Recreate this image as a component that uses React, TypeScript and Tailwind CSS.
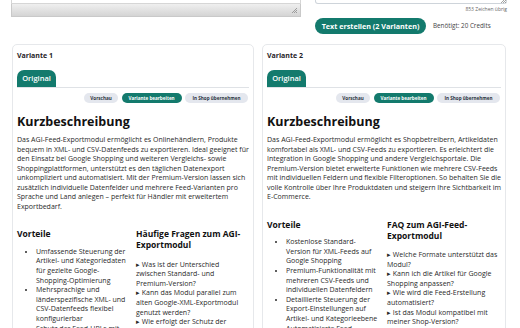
import React from "react";

const TEAL = "bg-[#137a6d]";

function Grip() {
  return (
    <svg width="5" height="5" viewBox="0 0 5 5" className="block">
      <path d="M5 0 L0 5 M5 2 L2 5 M5 4 L4 5" stroke="#8a8a8a" strokeWidth="0.8" />
    </svg>
  );
}

type Card = {
  title: string;
  para: string[];
  leftHead: string[];
  list: string[][];
  rightHead: string[];
  faq: string[][];
};

const cards: Card[] = [
  {
    title: "Variante 1",
    para: [
      "Das AGI-Feed-Exportmodul ermöglicht es Onlinehändlern, Produkte",
      "bequem in XML- und CSV-Datenfeeds zu exportieren. Ideal geeignet für",
      "den Einsatz bei Google Shopping und weiteren Vergleichs- sowie",
      "Shoppingplattformen, unterstützt es den täglichen Datenexport",
      "unkompliziert und automatisiert. Mit der Premium-Version lassen sich",
      "zusätzlich individuelle Datenfelder und mehrere Feed-Varianten pro",
      "Sprache und Land anlegen – perfekt für Händler mit erweitertem",
      "Exportbedarf.",
    ],
    leftHead: ["Vorteile"],
    list: [
      ["Umfassende Steuerung der", "Artikel- und Kategoriedaten", "für gezielte Google-", "Shopping-Optimierung"],
      ["Mehrsprachige und", "länderspezifische XML- und", "CSV-Datenfeeds flexibel", "konfigurierbar"],
      ["Schutz der Feed-URLs mit", "Passwort und Token"],
    ],
    rightHead: ["Häufige Fragen zum AGI-", "Exportmodul"],
    faq: [
      ["Was ist der Unterschied", "zwischen Standard- und", "Premium-Version?"],
      ["Kann das Modul parallel zum", "alten Google-XML-Exportmodul", "genutzt werden?"],
      ["Wie erfolgt der Schutz der", "Feed-URLs?"],
    ],
  },
  {
    title: "Variante 2",
    para: [
      "Das AGI-Feed-Exportmodul ermöglicht es Shopbetreibern, Artikeldaten",
      "komfortabel als XML- und CSV-Feeds zu exportieren. Es erleichtert die",
      "Integration in Google Shopping und andere Vergleichsportale. Die",
      "Premium-Version bietet erweiterte Funktionen wie mehrere CSV-Feeds",
      "mit individuellen Feldern und flexible Filteroptionen. So behalten Sie die",
      "volle Kontrolle über Ihre Produktdaten und steigern Ihre Sichtbarkeit im",
      "E-Commerce.",
    ],
    leftHead: ["Vorteile"],
    list: [
      ["Kostenlose Standard-", "Version für XML-Feeds auf", "Google Shopping"],
      ["Premium-Funktionalität mit", "mehreren CSV-Feeds und", "individuellen Datenfeldern"],
      ["Detaillierte Steuerung der", "Export-Einstellungen auf", "Artikel- und Kategorieebene"],
      ["Automatisierte Feed-", "Erstellung per Cronjob"],
    ],
    rightHead: ["FAQ zum AGI-Feed-", "Exportmodul"],
    faq: [
      ["Welche Formate unterstützt das", "Modul?"],
      ["Kann ich die Artikel für Google", "Shopping anpassen?"],
      ["Wie wird die Feed-Erstellung", "automatisiert?"],
      ["Ist das Modul kompatibel mit", "meiner Shop-Version?"],
    ],
  },
];

function Lines({ lines }: { lines: string[] }) {
  return (
    <>
      {lines.map((l, i) => (
        <span key={i} className="block whitespace-nowrap">
          {l}
        </span>
      ))}
    </>
  );
}

function VariantCard({ c }: { c: Card }) {
  return (
    <div className="flex-1 border border-[#e6e8eb] rounded-[5px] px-[4px] pt-[6px]">
      <div className="text-[7px] leading-[10px] font-bold text-[#1f2328]">{c.title}</div>
      <div className="mt-[9px] border-b border-[#dfe2e6] flex">
        <div className={`${TEAL} text-white text-[7.5px] font-semibold h-[17px] w-[39px] rounded-t-[7px] flex items-center justify-center`}>
          Original
        </div>
      </div>
      <div className="mt-[5px] flex justify-end gap-[3.5px] pr-[1px]">
        <span className="h-[10px] w-[34px] rounded-full bg-[#e4e7ee] text-[#2b3340] text-[4.6px] font-bold flex items-center justify-center">
          Vorschau
        </span>
        <span className={`h-[10px] w-[60px] rounded-full ${TEAL} text-white text-[4.6px] font-bold flex items-center justify-center`}>
          Variante bearbeiten
        </span>
        <span className="h-[10px] w-[63px] rounded-full bg-[#e4e7ee] text-[#2b3340] text-[4.6px] font-bold flex items-center justify-center">
          In Shop übernehmen
        </span>
      </div>
      <div className="mt-[12px] text-[12.5px] leading-[14px] font-bold text-[#111]">Kurzbeschreibung</div>
      <div className="mt-[6px] text-[7px] leading-[9.5px] text-[#2a2a2a]">
        <Lines lines={c.para} />
      </div>
      <div className="mt-[17px] grid grid-cols-2 gap-[6px]">
        <div>
          <div className="text-[8.5px] leading-[11.3px] font-bold text-[#111]">
            <Lines lines={c.leftHead} />
          </div>
          <ul className="mt-[7.5px] list-disc pl-[19px] text-[7px] leading-[9.6px] text-[#2a2a2a]">
            {c.list.map((it, i) => (
              <li key={i}>
                <Lines lines={it} />
              </li>
            ))}
          </ul>
        </div>
        <div>
          <div className="text-[8.5px] leading-[11.3px] font-bold text-[#111]">
            <Lines lines={c.rightHead} />
          </div>
          <div className="mt-[9px] text-[7px] leading-[9.6px] text-[#2a2a2a]">
            {c.faq.map((it, i) => (
              <div key={i}>
                <Lines lines={[`▸ ${it[0]}`, ...it.slice(1)]} />
              </div>
            ))}
          </div>
        </div>
      </div>
    </div>
  );
}

export default function App() {
  return (
    <div className="w-[520px] h-[328px] overflow-hidden bg-white font-['Open_Sans',sans-serif]">
      <div className="flex pl-[11px] h-[44px]">
        <div className="w-[290px]">
          <div className="h-[4px] border-x border-b border-[#d6d6d6] bg-white" />
          <div className="h-[13px] bg-gradient-to-b from-[#efefef] to-[#d4d4d4] border-x border-b border-[#c9c9c9] flex justify-end items-center pr-[3px]">
            <Grip />
          </div>
        </div>
        <div className="ml-[14px] w-[192px] flex flex-col">
          <div className="h-[4px] border-x border-b border-[#ced4da] rounded-b-[3px] bg-white flex justify-end items-end">
            <Grip />
          </div>
          <div className="mt-[2px] text-[5px] leading-[7px] text-right text-[#666]">853 Zeichen übrig</div>
          <div className="mt-[5px] flex items-center gap-[7px]">
            <div className={`h-[16px] w-[111px] rounded-full ${TEAL} text-white text-[7.2px] font-bold flex items-center justify-center`}>
              Text erstellen (2 Varianten)
            </div>
            <span className="text-[6.3px] text-[#444]">Benötigt: 20 Credits</span>
          </div>
        </div>
      </div>
      <div className="flex gap-[8px] pl-[12px] pr-[14px]">
        {cards.map((c, i) => (
          <VariantCard key={i} c={c} />
        ))}
      </div>
    </div>
  );
}
